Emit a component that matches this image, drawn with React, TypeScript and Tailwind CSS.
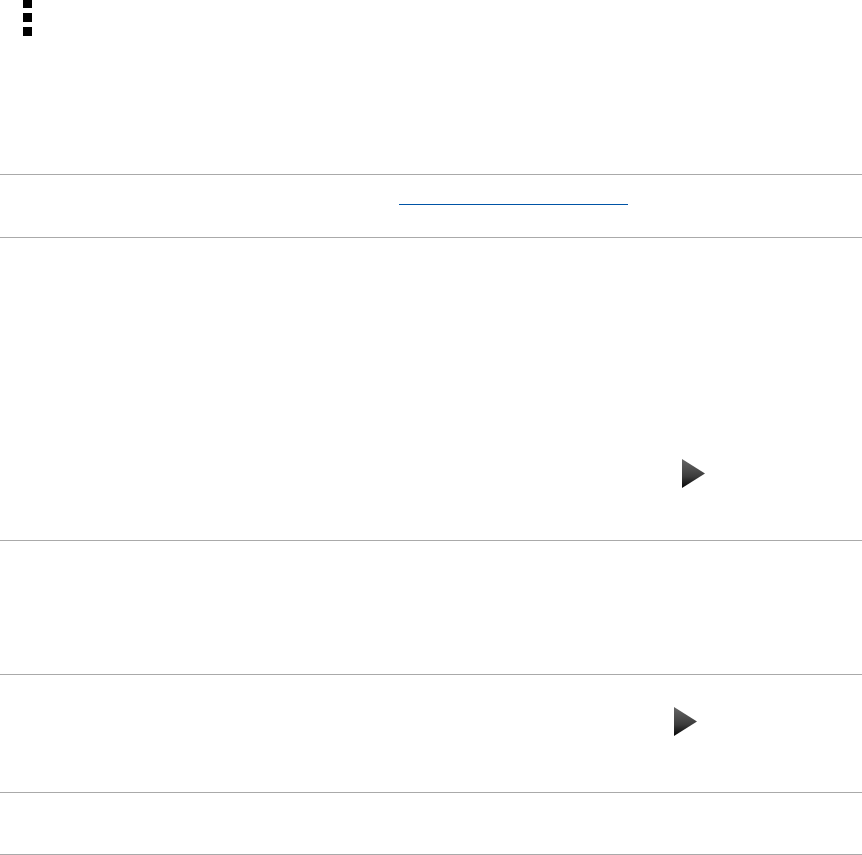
function Triangle({ id }: { id: string }) {
  return (
    <svg width="23" height="29" viewBox="0 0 23 29" className="block">
      <defs>
        <linearGradient id={id} x1="0" y1="0" x2="0" y2="1">
          <stop offset="0%" stopColor="#666666" />
          <stop offset="60%" stopColor="#3c3c3c" />
          <stop offset="100%" stopColor="#050505" />
        </linearGradient>
      </defs>
      <polygon points="0,0 23,14.5 0,29" fill={`url(#${id})`} />
    </svg>
  )
}

export default function App() {
  return (
    <div className="min-h-[855px] w-[862px] bg-white font-['Liberation_Sans',sans-serif]">
      <div className="h-[174px]">
        <div className="flex flex-col gap-[5px] pl-[23px]">
          <span className="block h-[8px] w-[9px] bg-black" />
          <span className="block h-[9px] w-[9px] bg-black" />
          <span className="block h-[9px] w-[9px] bg-black" />
        </div>
      </div>
      <div className="h-[63px] border-t border-[#aaaaaa] pt-[29px] pl-[399px]">
        <a href="#" className="block h-[1px] w-[229px] border-b border-[#0054a6]" aria-label="link" />
      </div>
      <div className="h-[303px] border-t border-[#aaaaaa] pt-[221px] pl-[682px]">
        <Triangle id="tri-a" />
      </div>
      <div className="h-[134px] border-t border-[#aaaaaa]" />
      <div className="h-[118px] border-t border-[#aaaaaa] pt-[32px] pl-[674px]">
        <Triangle id="tri-b" />
      </div>
      <div className="h-[63px] border-y border-[#aaaaaa]" />
    </div>
  )
}
